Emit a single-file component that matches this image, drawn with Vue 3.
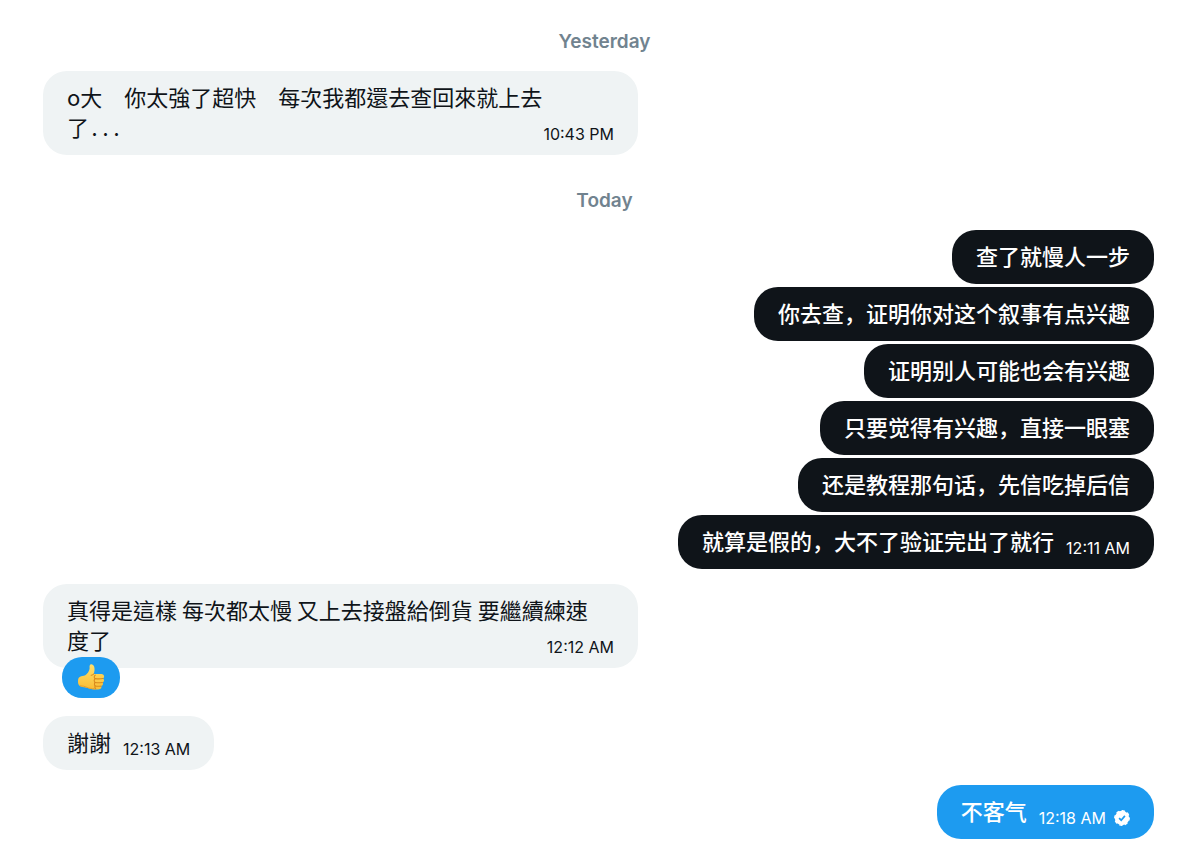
<script setup>
import { ref } from 'vue'

const days = ref([
  {
    label: 'Yesterday',
    messages: [
      { id: 1, type: 'received', lang: 'zh-Hant', wide: true, lines: ['o大　你太強了超快　每次我都還去查回來就上去', '了...'], time: '10:43 PM' },
    ],
  },
  {
    label: 'Today',
    messages: [
      { id: 2, type: 'sent', lang: 'zh-Hans', lines: ['查了就慢人一步'] },
      { id: 3, type: 'sent', lang: 'zh-Hans', lines: ['你去查，证明你对这个叙事有点兴趣'] },
      { id: 4, type: 'sent', lang: 'zh-Hans', lines: ['证明别人可能也会有兴趣'] },
      { id: 5, type: 'sent', lang: 'zh-Hans', lines: ['只要觉得有兴趣，直接一眼塞'] },
      { id: 6, type: 'sent', lang: 'zh-Hans', lines: ['还是教程那句话，先信吃掉后信'] },
      { id: 7, type: 'sent', lang: 'zh-Hans', lines: ['就算是假的，大不了验证完出了就行'], time: '12:11 AM' },
      { id: 8, type: 'received', lang: 'zh-Hant', wide: true, liked: true, lines: ['真得是這樣 每次都太慢 又上去接盤給倒貨 要繼續練速', '度了'], time: '12:12 AM' },
      { id: 9, type: 'received', lang: 'zh-Hant', lines: ['謝謝'], time: '12:13 AM' },
      { id: 10, type: 'sent', lang: 'zh-Hans', blue: true, lines: ['不客气'], time: '12:18 AM' },
    ],
  },
])
</script>

<template>
  <main class="chat">
    <section v-for="day in days" :key="day.label" class="day">
      <h2>{{ day.label }}</h2>
      <div
        v-for="message in day.messages"
        :key="message.id"
        class="message"
        :class="[message.type, { wide: message.wide, blue: message.blue, liked: message.liked, last: message.time }]"
      >
        <p v-for="(line, i) in message.lines" :key="i" class="line">
          <span class="text" :class="{ dots: line.endsWith('...') }" :lang="message.lang">{{ line }}</span>
          <span v-if="i === message.lines.length - 1" class="meta">
            <time v-if="message.time">{{ message.time }}</time>
            <svg v-if="message.blue" class="read" viewBox="0 0 16 16" aria-hidden="true">
              <circle cx="8" cy="8" r="7.2" fill="#fff" />
              <circle cx="8" cy="8" r="7.2" fill="none" stroke="#fff" stroke-width="1.4" stroke-linecap="round" stroke-dasharray="2.2 3.455" />
              <path d="M5.1 8.2l2.1 2 3.7-4.3" fill="none" stroke="#1d9bf0" stroke-width="1.7" />
            </svg>
          </span>
        </p>
        <button v-if="message.liked" class="reaction" type="button" aria-label="Like">
          <svg viewBox="0 0 28 28" aria-hidden="true">
            <defs>
              <linearGradient id="skin" x1="0" y1="0" x2="0" y2="1">
                <stop offset="0" stop-color="#ffdf6b" />
                <stop offset="1" stop-color="#f9bd35" />
              </linearGradient>
            </defs>
            <path fill="url(#skin)" d="M2 14.5C4 12.8 6.6 13.2 8.3 12.3c2-1.3 4-4.2 4.3-6.5.1-1.6-.4-3.2.6-4.1 1.3-1 3.4.1 4 2.1.8 2.6.2 5-.5 7.2l7.6.1c1.8 0 2.8 1 2.8 2.3 0 1-.5 1.7-1.2 2 .9.5 1.2 1.3 1.1 2.1-.1 1-.7 1.7-1.5 2 .5.6.7 1.3.4 2.1-.3.9-.9 1.3-1.6 1.5.3.6.3 1.2-.1 1.9-.6 1-1.5 1.3-3 1.4-3.5.2-6.9 0-9.7-1.2-1.9-.8-3.7-1.2-6.3-1.3C2.2 23.5 1 21.6 1 19c0-1.9.2-3.6 1-4.5z" />
            <g fill="none" stroke="#d98a1d" stroke-width="1.1" stroke-linecap="round">
              <path d="M16.7 11c-.7.9-1.5 1.2-2.5 1.3" />
              <path d="M25.7 15.5c-2 .5-5.3.4-7.6.1" />
              <path d="M25.3 19.5c-2 .4-5.2.3-7.2 0" />
              <path d="M24 23.1c-1.9.3-4.1.2-5.8-.1" />
              <path d="M18.2 12.2c-1.2.9-1.3 2.5-.1 3.4-1.2.9-1.2 3 0 3.9-.9.9-.9 2.6.1 3.5-.5.9-.4 2 .4 2.6" />
            </g>
            <path d="M3 22.8c2.6.1 4.8.5 6.6 1.4 2.5 1.1 5.3 1.6 8.3 1.5" fill="none" stroke="#e9a12c" stroke-width="1" />
          </svg>
        </button>
      </div>
    </section>
  </main>
</template>

<style>
body {
  margin: 0;
  background: #fff;
}
</style>

<style scoped>
.chat {
  padding: 30px 34px 15px 43px;
  font-family: Inter, "Liberation Sans", sans-serif;
  color: #0f1419;
}
.day {
  display: flex;
  flex-direction: column;
  align-items: flex-start;
}
.day + .day {
  margin-top: 19px;
}
h2 {
  align-self: stretch;
  margin: 0 0 17px;
  padding-left: 12px;
  font-size: 19px;
  font-weight: 600;
  line-height: 24px;
  text-align: center;
  color: #71838f;
}
.message {
  position: relative;
  box-sizing: border-box;
  max-width: 100%;
  margin-bottom: 3px;
  padding: 10px 24px 12px;
  border-radius: 24px;
  background: #eff3f4;
}
.wide {
  width: 595px;
}
.last {
  margin-bottom: 15px;
}
.liked {
  margin-bottom: 48px;
}
.sent {
  align-self: flex-end;
  background: #0f1419;
  color: #fff;
}
.sent.blue {
  background: #1d9bf0;
}
.line {
  display: flex;
  align-items: flex-start;
  justify-content: space-between;
  margin: 0;
}
.text {
  font-family: "Noto Sans CJK SC", sans-serif;
  font-size: 22px;
  line-height: 30px;
}
.text:lang(zh-Hant) {
  font-family: "Noto Sans CJK TC", sans-serif;
}
.sent .text {
  font-weight: 500;
}
.dots {
  font-feature-settings: "hwid";
}
.meta {
  display: flex;
  align-items: center;
  gap: 8px;
  padding-top: 14px;
  font-size: 16px;
  line-height: 18px;
  min-height: 18px;
  white-space: nowrap;
}
.meta time {
  margin-left: 12px;
}
.read {
  width: 16px;
  height: 16px;
}
.reaction {
  position: absolute;
  left: 19px;
  bottom: -30px;
  display: flex;
  align-items: center;
  justify-content: center;
  width: 58px;
  height: 41px;
  padding: 0 0 2px;
  border: 0;
  border-radius: 20px;
  background: #1d9bf0;
  cursor: pointer;
}
.reaction svg {
  width: 28px;
  height: 28px;
}
</style>
